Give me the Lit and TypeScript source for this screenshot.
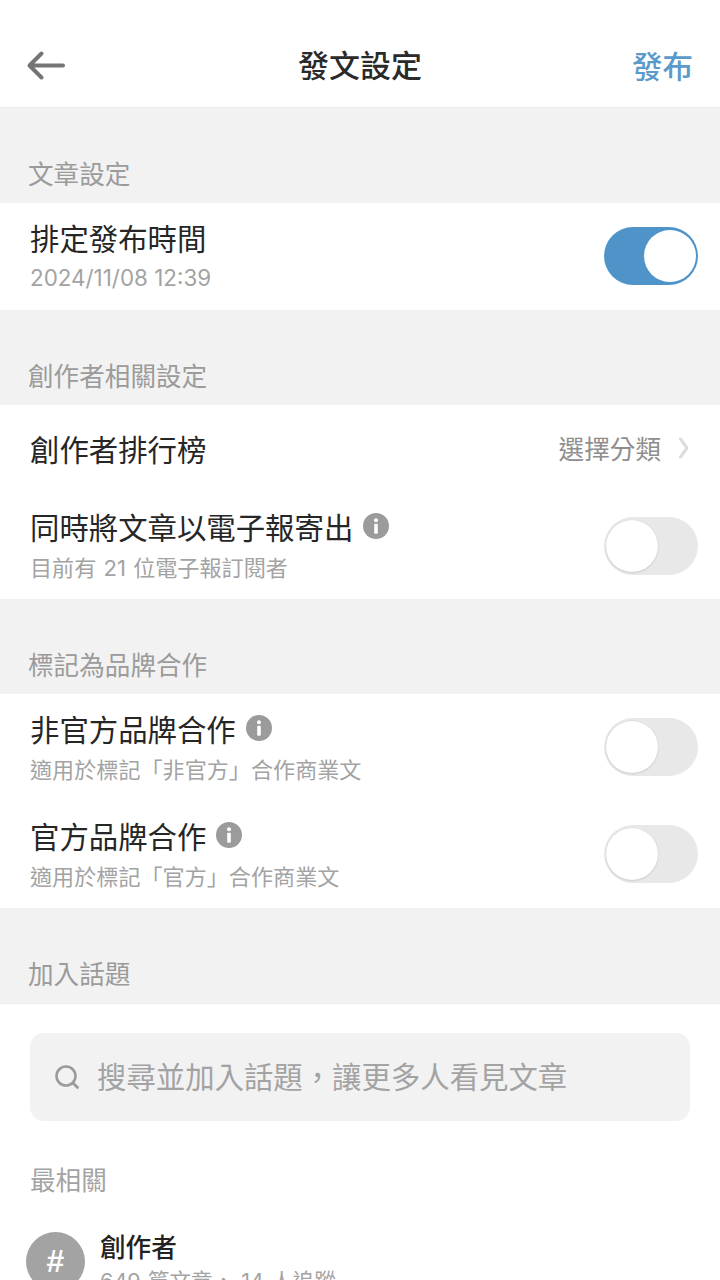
import { LitElement, html, css } from "lit";
import { customElement } from "lit/decorators.js";

const info = html`<svg class="info" viewBox="0 0 26 26"><circle cx="13" cy="13" r="13" fill="#9b9b9b"/><circle cx="13" cy="7.2" r="2" fill="#fff"/><rect x="11.2" y="10.8" width="3.6" height="10" rx="1" fill="#fff"/></svg>`;

@customElement("app-root")
export class AppRoot extends LitElement {
  static styles = css`
    :host { display: block; width: 720px; height: 1280px; overflow: hidden; background: #f2f2f2;
      font-family: "Noto Sans CJK TC", "Noto Sans", sans-serif; color: #222; }
    .header { height: 108px; box-sizing: border-box; background: #fff; border-bottom: 1px solid #ececec;
      display: flex; align-items: center; justify-content: space-between; padding: 25px 27px 0 26px; position: relative; }
    .back { width: 40px; height: 32px; display: block; }
    .title { position: absolute; left: 0; right: 0; top: 40px; text-align: center; font-size: 31px; line-height: 50px; font-weight: 500; color: #2a2a2a; height: 50px; margin-top: -1px; }
    .publish { font-size: 30.5px; line-height: 44px; font-weight: 500; color: #5b9ac9; margin-top: -2px; }
    .label { box-sizing: border-box; height: 95px; padding: 44px 0 0 28px; font-size: 25.6px; line-height: 42px; color: #9b9b9b; }
    .card { background: #fff; }
    .row { display: flex; align-items: center; justify-content: space-between; padding: 0 22px 0 30px; box-sizing: border-box; }
    .block { padding-bottom: 4px; }
    .block.dated { padding-bottom: 4px; }
    .t { font-size: 29.4px; line-height: 44px; color: #262626; display: flex; align-items: center; gap: 10px; }
    .s { font-family: Inter, "Noto Sans CJK TC", sans-serif; font-size: 22.1px; line-height: 32px; color: #a3a3a3; margin-top: 4px; word-spacing: 1px; }
    .date { margin-top: 3px; font-size: 22.4px; word-spacing: 0; }
    .info { width: 26px; height: 26px; display: block; flex: none; }
    .sw { width: 94px; height: 58px; margin-bottom: 1px; border-radius: 29px; box-sizing: border-box; background: #e8e8e8; position: relative; flex: none; }
    .sw::after { content: ""; position: absolute; width: 52px; height: 52px; border-radius: 50%; background: #fff; top: 3px; left: 2px; box-shadow: 0 1px 2px rgba(0,0,0,.10), 0 0 1px rgba(0,0,0,.14); }
    .sw.on { background: #4f94c9; }
    .sw.on::after { left: 40px; top: 3px; box-shadow: none; }
    .h107 { height: 107px; }
    .h88 { height: 88px; }
    .h106 { height: 106px; }
    .tight { padding-bottom: 3px; }
    .pick { display: flex; align-items: center; gap: 18px; color: #8e8e8e; font-size: 25.6px; line-height: 40px; padding-right: 9px; }
    .chev { width: 10px; height: 22px; display: block; }
    .topic { padding: 29px 30px 0 30px; background: #fff; height: 400px; border-top: 1px solid #ececec; box-sizing: border-box; }
    .search { height: 88px; border-radius: 14px; background: #f2f2f2; display: flex; align-items: center; padding-left: 24px; gap: 17px; font-size: 29.4px; color: #a3a3a3; }
    .search span { line-height: 44px; margin-bottom: 4px; }
    .mag { width: 26px; height: 26px; display: block; flex: none; }
    .near { font-size: 25.6px; line-height: 42px; color: #a3a3a3; margin-top: 37px; }
    .item { display: flex; gap: 15px; margin: 30px 0 0 -4px; }
    .avatar { width: 59px; height: 59px; margin-top: 2px; border-radius: 50%; background: #a3a3a3; color: #fff; flex: none; display: flex; align-items: center; justify-content: center; font-family: "Liberation Sans", sans-serif; font-weight: 700; font-size: 32px; }
    .name { font-size: 25.6px; line-height: 34px; font-weight: 500; color: #222; margin-top: -1px; }
    .meta { font-family: Inter, "Noto Sans CJK TC", sans-serif; font-size: 21.6px; line-height: 30px; color: #a3a3a3; margin-top: 3px; word-spacing: 1px; }
  `;

  render() {
    return html`
      <div class="header">
        <svg class="back" viewBox="0 0 40 32"><path d="M4 15.500H37M15.500 3.500 3.500 15.500 15.500 27.500" fill="none" stroke="#757575" stroke-width="4" stroke-linecap="round" stroke-linejoin="round"/></svg>
        <div class="title">發文設定</div>
        <div class="publish">發布</div>
      </div>

      <div class="label">文章設定</div>
      <div class="card">
        <div class="row h107">
          <div class="block dated">
            <div class="t">排定發布時間</div>
            <div class="s date">2024/11/08 12:39</div>
          </div>
          <div class="sw on"></div>
        </div>
      </div>

      <div class="label">創作者相關設定</div>
      <div class="card">
        <div class="row h88">
          <div class="t tight">創作者排行榜</div>
          <div class="pick tight">選擇分類
            <svg class="chev" viewBox="0 0 10 22"><path d="M1.500 2 8 11 1.500 20" fill="none" stroke="#dcdcdc" stroke-width="3" stroke-linecap="round" stroke-linejoin="round"/></svg>
          </div>
        </div>
        <div class="row h106">
          <div class="block">
            <div class="t">同時將文章以電子報寄出 ${info}</div>
            <div class="s">目前有 21 位電子報訂閱者</div>
          </div>
          <div class="sw"></div>
        </div>
      </div>

      <div class="label">標記為品牌合作</div>
      <div class="card">
        <div class="row h107">
          <div class="block">
            <div class="t">非官方品牌合作 ${info}</div>
            <div class="s">適用於標記「非官方」合作商業文</div>
          </div>
          <div class="sw"></div>
        </div>
        <div class="row h107">
          <div class="block">
            <div class="t">官方品牌合作 ${info}</div>
            <div class="s">適用於標記「官方」合作商業文</div>
          </div>
          <div class="sw"></div>
        </div>
      </div>

      <div class="label">加入話題</div>
      <div class="topic">
        <div class="search">
          <svg class="mag" viewBox="0 0 26 26"><circle cx="12" cy="12" r="9.500" fill="none" stroke="#9b9b9b" stroke-width="2.600"/><path d="M19 19 23.500 23.500" stroke="#9b9b9b" stroke-width="2.800" stroke-linecap="round"/></svg>
          <span>搜尋並加入話題\uFF0C讓更多人看見文章</span>
        </div>
        <div class="near">最相關</div>
        <div class="item">
          <div class="avatar">#</div>
          <div>
            <div class="name">創作者</div>
            <div class="meta">649 篇文章\uFF0C 14 人追蹤</div>
          </div>
        </div>
      </div>
    `;
  }
}
